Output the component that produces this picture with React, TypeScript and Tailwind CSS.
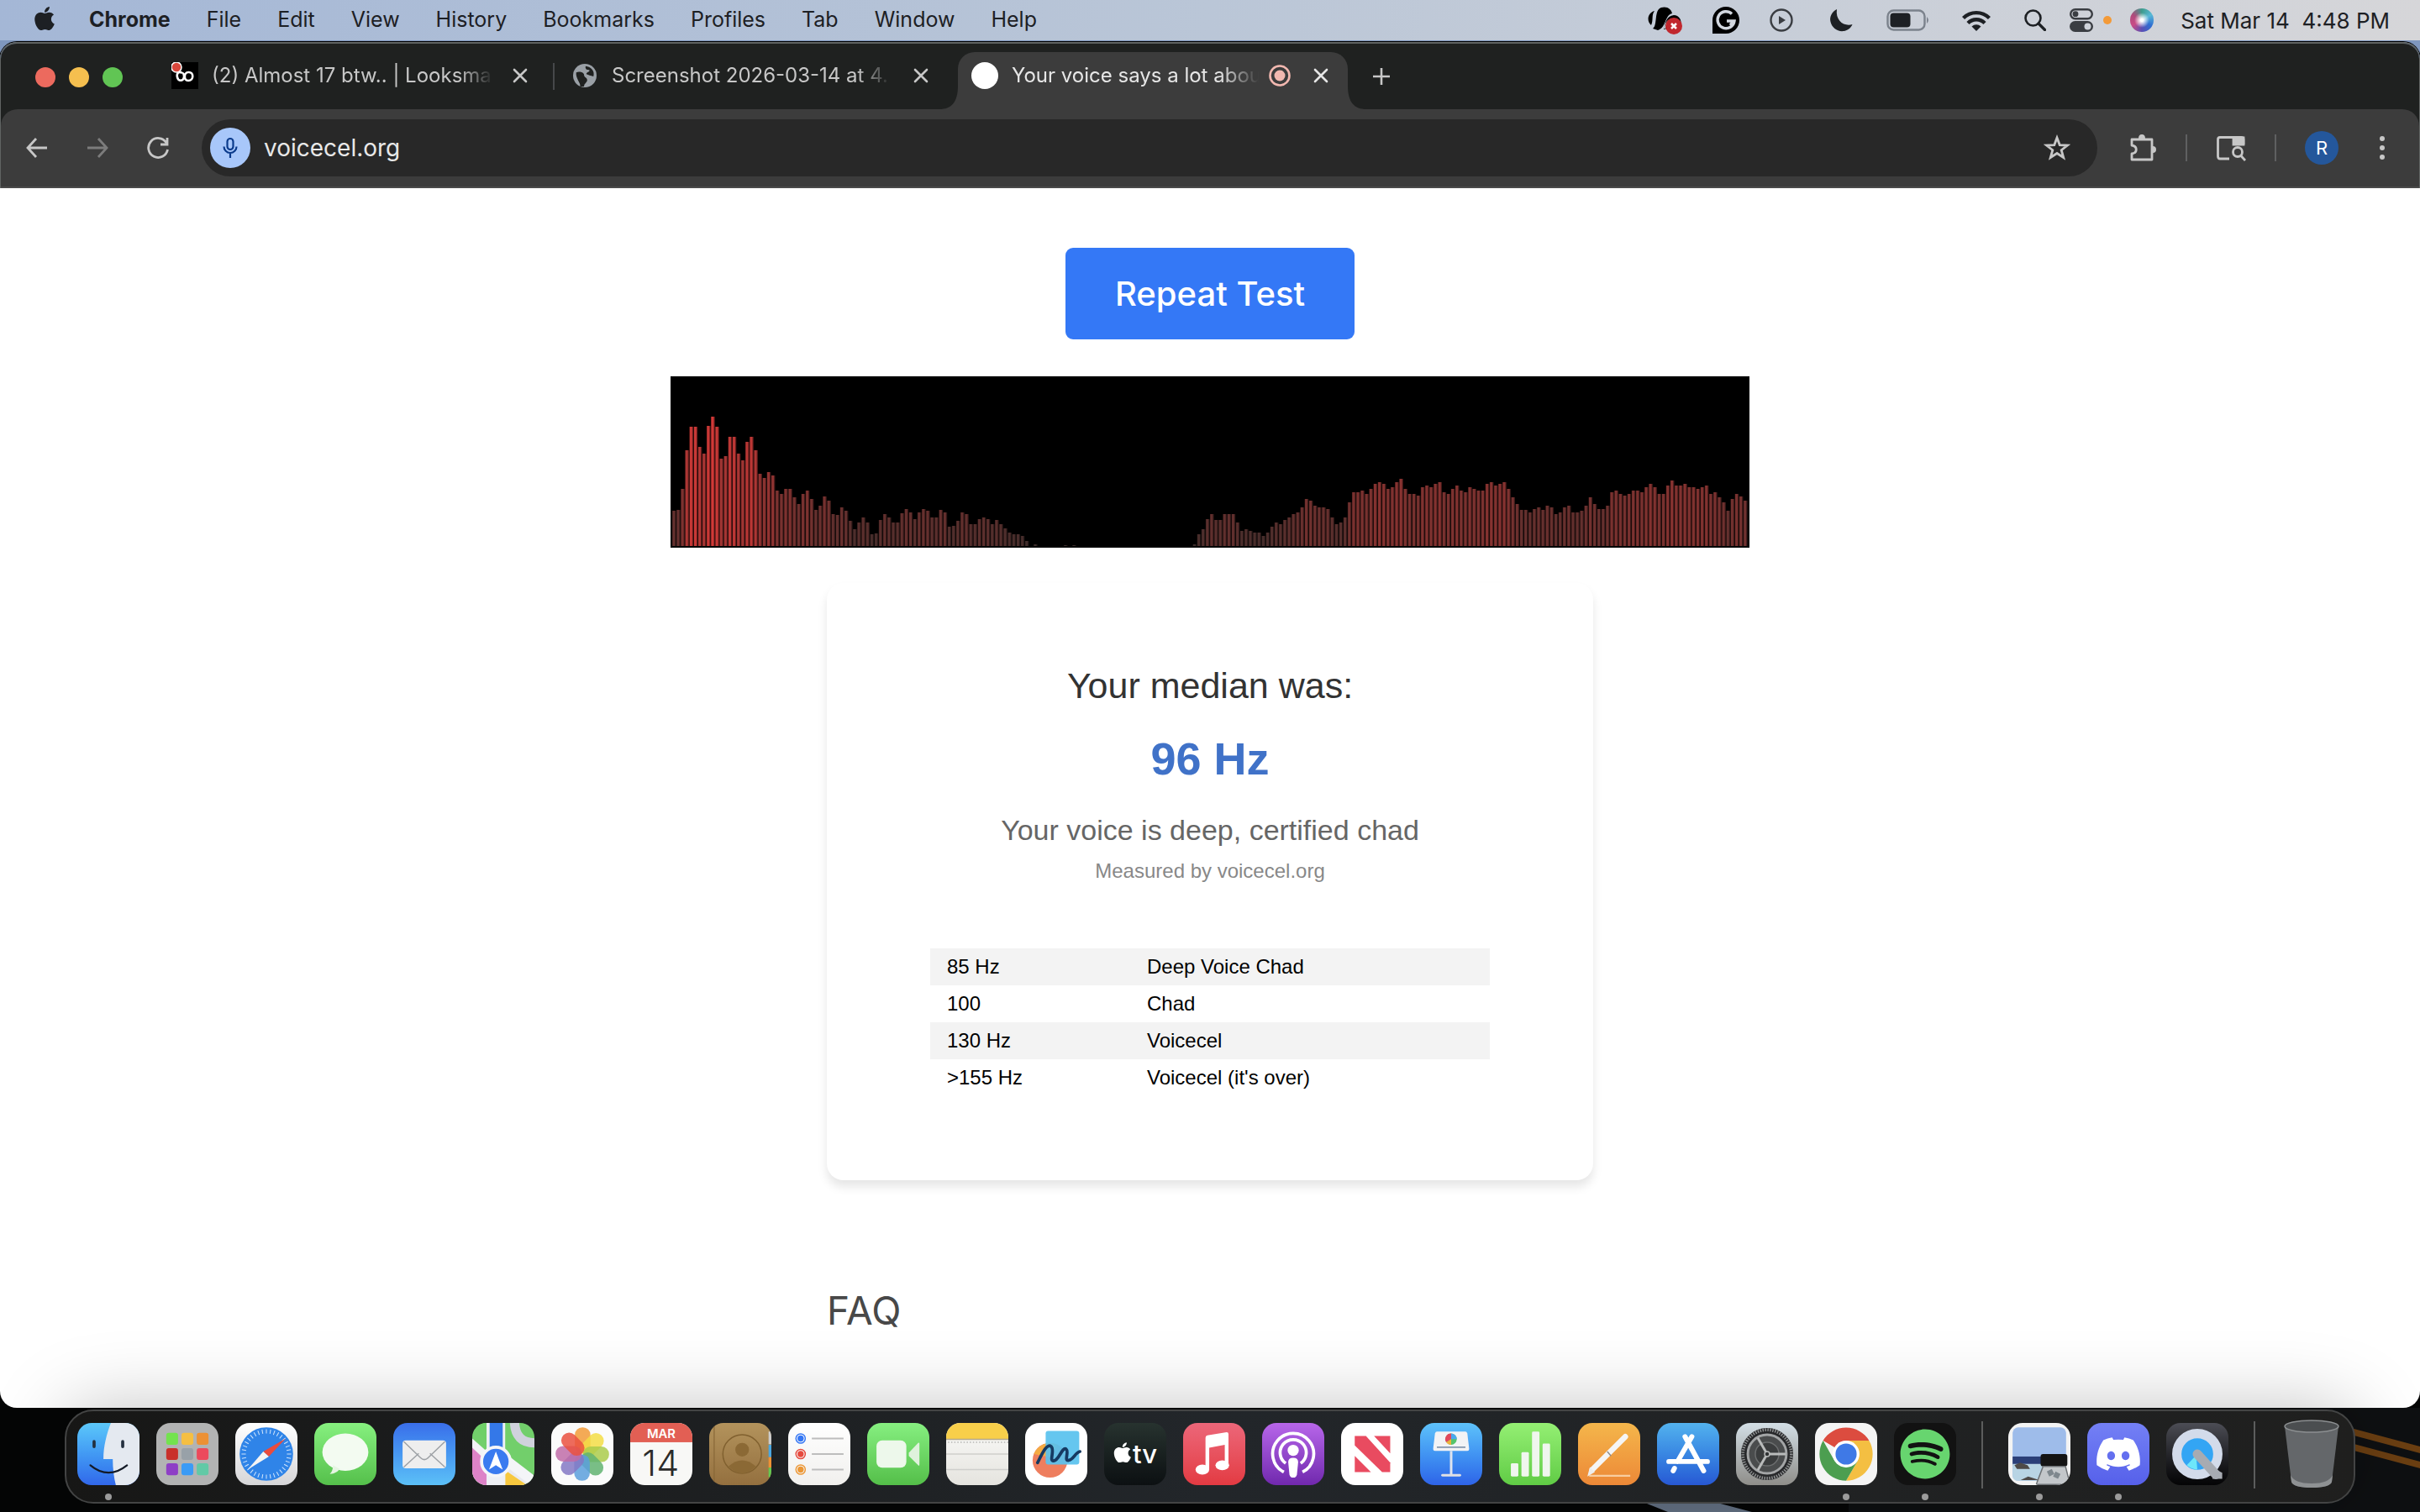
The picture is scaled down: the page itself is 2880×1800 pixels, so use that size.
import type { ReactNode } from "react";
import { FaApple, FaDiscord, FaSpotify } from "react-icons/fa";

const menuItems = [
  "File",
  "Edit",
  "View",
  "History",
  "Bookmarks",
  "Profiles",
  "Tab",
  "Window",
  "Help",
];

// bar heights in px, left to right
const spectrum = [
  42, 43, 68, 114, 142, 142, 118, 110, 143, 154, 142, 104, 107, 130, 130, 110,
  102, 124, 130, 114, 86, 81, 88, 84, 66, 62, 68, 68, 58, 50, 62, 66, 56, 43,
  48, 59, 54, 38, 37, 46, 42, 30, 20, 28, 34, 28, 14, 15, 31, 38, 34, 28, 28,
  39, 44, 40, 32, 40, 44, 42, 34, 34, 43, 40, 23, 24, 30, 40, 38, 26, 26, 32,
  34, 32, 26, 31, 26, 21, 16, 14, 14, 12, 6, 0, 2, 0, 0, 0, 0, 0, 0, 1, 0, 1,
  0, 0, 0, 0, 0, 0, 0, 0, 0, 0, 0, 0, 0, 0, 0, 0, 0, 0, 0, 0, 0, 0, 0, 0, 0, 0,
  0, 2, 14, 20, 32, 38, 31, 31, 38, 38, 38, 28, 18, 20, 18, 16, 16, 12, 16, 23,
  28, 26, 31, 34, 38, 40, 46, 56, 54, 48, 46, 46, 44, 34, 26, 28, 34, 52, 64,
  64, 66, 62, 68, 74, 76, 74, 68, 70, 76, 80, 68, 62, 62, 60, 70, 72, 70, 74,
  76, 64, 62, 68, 72, 66, 64, 70, 68, 66, 66, 74, 76, 72, 74, 76, 68, 58, 50,
  43, 43, 40, 44, 46, 43, 48, 46, 38, 40, 46, 48, 40, 40, 42, 48, 58, 50, 44,
  44, 48, 64, 66, 62, 60, 62, 66, 66, 64, 70, 74, 70, 62, 62, 72, 78, 72, 72,
  74, 70, 70, 68, 70, 72, 62, 64, 58, 52, 42, 56, 62, 59, 54,
];

const ranges = [
  ["85 Hz", "Deep Voice Chad"],
  ["100", "Chad"],
  ["130 Hz", "Voicecel"],
  [">155 Hz", "Voicecel (it's over)"],
];

type DockApp = {
  name: string;
  bg: string;
  running?: boolean;
  art: ReactNode;
};

const ticks = (n: number) => Array.from({ length: n }, (_, i) => (360 / n) * i);

const apps: DockApp[] = [
  {
    name: "Finder",
    bg: "bg-linear-to-b from-[#5cc8fa] to-[#3267ea]",
    running: true,
    art: (
      <>
        <path d="M54 0C47 18 42 38 42 58H57C57 74 59 88 62 100H100V0Z" fill="#e4e9f0" />
        <path d="M27 30v8M73 30v8" stroke="#24303f" strokeWidth="5" strokeLinecap="round" />
        <path d="M21 68Q50 92 80 68" fill="none" stroke="#131a26" strokeWidth="3" strokeLinecap="round" />
      </>
    ),
  },
  {
    name: "Launchpad",
    bg: "bg-[#b2b3b3]",
    art: (
      <>
        {["#73e34e", "#f5bf42", "#ec9135", "#c9302a", "#98a1a8", "#ec4a5c", "#8e3fc6", "#3b9bf5", "#62c9a6"].map((c, i) => (
          <rect key={c} x={16 + (i % 3) * 24.5} y={16 + Math.floor(i / 3) * 24.5} width="19" height="19" rx="4" fill={c} />
        ))}
      </>
    ),
  },
  {
    name: "Safari",
    bg: "bg-linear-to-b from-white to-[#d6d6d8]",
    art: (
      <>
        <circle cx="50" cy="50" r="43" fill="#2f84e8" />
        {ticks(36).map((a) => (
          <path key={a} d="M50 10v7" stroke="#cfe4fb" strokeWidth="1.4" transform={`rotate(${a} 50 50)`} />
        ))}
        <path d="M81 25L45 46L54 54Z" fill="#ea4b3d" />
        <path d="M20 75L45 46L54 54Z" fill="#f4f4f4" />
      </>
    ),
  },
  {
    name: "Messages",
    bg: "bg-linear-to-b from-[#86f07f] to-[#55c04b]",
    art: (
      <>
        <ellipse cx="50" cy="47" rx="37" ry="30" fill="#f3fbf1" />
        <path d="M30 68c0 8-2 11-5 14 8 0 13-4 16-8z" fill="#e6f5e3" />
      </>
    ),
  },
  {
    name: "Mail",
    bg: "bg-linear-to-b from-[#3a6eea] to-[#5cc0f7]",
    art: (
      <>
        <rect x="15" y="28" width="70" height="45" rx="5" fill="#eeeeee" />
        <path d="M17 71L41 49M83 71L59 49M17 30L44 56Q50 62 56 56L83 30" fill="none" stroke="#9da1a5" strokeWidth="2" />
      </>
    ),
  },
  {
    name: "Maps",
    bg: "bg-[#72cf6b]",
    art: (
      <>
        <path d="M0 25L26 48V100H0Z" fill="#f2f3f6" />
        <path d="M0 40L24 62V100H0Z" fill="#dd83c8" />
        <path d="M0 0h24v30Z" fill="#6fd068" />
        <path d="M53 52L100 90V100H25V75Z" fill="#e9eaf0" />
        <path d="M52 58L100 95" stroke="#f4f5f8" strokeWidth="16" />
        <path d="M53 76L88 100H53Z" fill="#f7c83f" />
        <path d="M68 0Q70 32 100 32" fill="none" stroke="#d0d2dc" strokeWidth="15" />
        <rect x="23" width="30" height="100" fill="#eef0f5" />
        <rect x="28" width="21" height="60" fill="#3478e8" />
        <circle cx="38" cy="62" r="23" fill="#3a7bf0" stroke="#f4f5f8" strokeWidth="5" />
        <path d="M38 46L49 75L38 68L27 75Z" fill="white" />
      </>
    ),
  },
  {
    name: "Photos",
    bg: "bg-[#fbfbfb]",
    art: (
      <>
        {["#f29b38", "#f3dd45", "#aacb4b", "#62b371", "#5a9fdc", "#8478c4", "#c06ca8", "#ea5140"].map((c, i) => (
          <rect key={c} x="38" y="7" width="25" height="42" rx="12" fill={c} opacity="0.85" transform={`rotate(${i * 45} 50 50)`} />
        ))}
      </>
    ),
  },
  {
    name: "Calendar",
    bg: "bg-[#f8f8f6]",
    art: (
      <>
        <rect width="100" height="31" fill="#e25f54" />
        <text x="50" y="24" textAnchor="middle" fill="white" fontSize="20" fontWeight="600">MAR</text>
        <text x="49" y="85" textAnchor="middle" fill="#2b2b2b" fontSize="58" fontWeight="300">14</text>
      </>
    ),
  },
  {
    name: "Contacts",
    bg: "bg-linear-to-b from-[#b3935c] to-[#94703f]",
    art: (
      <>
        <path d="M8 0v100" stroke="#866636" strokeWidth="1.5" />
        <circle cx="53" cy="50" r="31" fill="none" stroke="#80602f" strokeWidth="2" />
        <circle cx="53" cy="43" r="11" fill="#8b6935" />
        <path d="M31 70Q53 50 75 70Q53 92 31 70Z" fill="#8b6935" />
        <path d="M98 14v20" stroke="#ccc" strokeWidth="5" />
        <path d="M98 35v20" stroke="#4ba7e0" strokeWidth="5" />
        <path d="M98 55v17" stroke="#ee9134" strokeWidth="5" />
        <path d="M98 72v15" stroke="#65c950" strokeWidth="5" />
      </>
    ),
  },
  {
    name: "Reminders",
    bg: "bg-linear-to-b from-white to-[#f1f0ee]",
    art: (
      <>
        {["#3577f4", "#e64a3e", "#ec9735"].map((c, i) => (
          <g key={c}>
            <circle cx="20" cy={25 + i * 25} r="7.5" fill="none" stroke={c} strokeWidth="2" />
            <circle cx="20" cy={25 + i * 25} r="5" fill={c} />
            <path d={`M38 ${25 + i * 25}H89`} stroke="#bdbdbd" strokeWidth="2.4" />
          </g>
        ))}
      </>
    ),
  },
  {
    name: "FaceTime",
    bg: "bg-linear-to-b from-[#86ef80] to-[#54bf49]",
    art: (
      <>
        <rect x="15" y="28" width="48" height="44" rx="9" fill="#edf8eb" />
        <path d="M67 48L82 32Q84 31 84 33V67Q84 70 82 68L67 53Z" fill="#dff2dc" />
      </>
    ),
  },
  {
    name: "Notes",
    bg: "bg-linear-to-b from-[#fafaf8] to-[#e5e4df]",
    art: (
      <>
        <rect width="100" height="26" fill="#f8cf4a" />
        <path d="M0 26.5H100" stroke="#b5a98c" strokeWidth="2" />
        <path d="M3 31H100" stroke="#b6b6b2" strokeWidth="2" strokeDasharray="2 3" />
        <path d="M0 50H100M0 75H100" stroke="#cfcfcc" strokeWidth="2" />
      </>
    ),
  },
  {
    name: "Freeform",
    bg: "bg-white",
    art: (
      <>
        <circle cx="40" cy="60" r="28" fill="#ee7e5e" />
        <path d="M14 50A28 28 0 0 1 52 35L40 55Z" fill="#f4ab43" />
        <rect x="33" y="13" width="54" height="54" rx="4" fill="#59c2ee" opacity="0.93" />
        <path d="M20 64C27 50 35 32 42 38C48 44 38 62 46 61C55 60 59 38 66 42C71 46 62 62 70 60C78 59 80 48 88 46" fill="none" stroke="#163a62" strokeWidth="5" strokeLinecap="round" />
      </>
    ),
  },
  {
    name: "TV",
    bg: "bg-linear-to-b from-[#27332f] to-[#0c1012]",
    art: (
      <>
        <FaApple x="11" y="29" size={37} color="white" />
        <text x="46" y="65" fill="white" fontSize="42" fontWeight="500">tv</text>
      </>
    ),
  },
  {
    name: "Music",
    bg: "bg-linear-to-b from-[#ec6679] to-[#e33a42]",
    art: (
      <>
        <path d="M36 24Q36 21 39 20L70 15Q73 15 73 18V66H67V35L42 40V74H36Z" fill="white" />
        <ellipse cx="31" cy="75" rx="11" ry="8" fill="white" />
        <ellipse cx="63" cy="68" rx="11" ry="8" fill="white" />
      </>
    ),
  },
  {
    name: "Podcasts",
    bg: "bg-linear-to-b from-[#b866ea] to-[#7128ae]",
    art: (
      <>
        <path d="M35 79A33 33 0 1 1 65 79" fill="none" stroke="white" strokeWidth="5" />
        <path d="M38 65A21 21 0 1 1 62 65" fill="none" stroke="white" strokeWidth="5" />
        <circle cx="50" cy="44" r="9" fill="white" />
        <path d="M42 63Q42 56 50 56Q58 56 58 63L56 83Q55 88 50 88Q45 88 44 83Z" fill="white" />
      </>
    ),
  },
  {
    name: "News",
    bg: "bg-white",
    art: (
      <>
        <path d="M22 21H40L79 64V79H66L22 36Z" fill="#e94b60" />
        <path d="M53 21H79V49ZM22 53V79H48Z" fill="#e94b60" />
      </>
    ),
  },
  {
    name: "Keynote",
    bg: "bg-linear-to-b from-[#5ec2fa] to-[#2f63e8]",
    art: (
      <>
        <path d="M27 14H73Q75 14 76 17L79 42Q79 45 76 45H24Q21 45 21 42L24 17Q25 14 27 14Z" fill="#f2f3f5" />
        <path d="M27 39H73" stroke="#8597ae" strokeWidth="2.5" />
        <circle cx="50" cy="26" r="9" fill="#55c46c" />
        <path d="M50 26V17A9 9 0 0 1 59 26Z" fill="#4aa8ee" />
        <path d="M50 26V17A9 9 0 0 0 42 31Z" fill="#e1485c" />
        <path d="M50 26L42 31A9 9 0 0 0 50 35Z" fill="#efb23c" />
        <rect x="48" y="45" width="4" height="38" fill="#dfe4ee" />
        <rect x="34" y="82" width="32" height="4" rx="2" fill="#dfe0e4" />
      </>
    ),
  },
  {
    name: "Numbers",
    bg: "bg-linear-to-b from-[#94ef73] to-[#60cc45]",
    art: (
      <>
        <rect x="19" y="65" width="12" height="21" rx="2" fill="#f0f6ee" />
        <rect x="36" y="47" width="12" height="39" rx="2" fill="#f0f6ee" />
        <rect x="53" y="14" width="12" height="72" rx="2" fill="#f0f6ee" />
        <rect x="70" y="33" width="12" height="53" rx="2" fill="#f0f6ee" />
      </>
    ),
  },
  {
    name: "Pages",
    bg: "bg-linear-to-b from-[#f4b64b] to-[#ec8837]",
    art: (
      <>
        <path d="M18 85H84" stroke="#f8cda0" strokeWidth="3" />
        <path d="M23 75L76 22" stroke="#f5f5f5" strokeWidth="9" strokeLinecap="round" />
        <path d="M15 86L19 71L27 79Z" fill="#ededed" />
        <path d="M47 46L53 53" stroke="#8b8b8b" strokeWidth="2" />
      </>
    ),
  },
  {
    name: "App Store",
    bg: "bg-linear-to-b from-[#53b2ee] to-[#2858d4]",
    art: (
      <g stroke="white" strokeWidth="8" strokeLinecap="round">
        <path d="M56 22L33 62M45 22L75 77M19 62H81M28 73L26 77" />
      </g>
    ),
  },
  {
    name: "System Settings",
    bg: "bg-linear-to-b from-[#d3dfe6] to-[#8f8e8a]",
    art: (
      <>
        <circle cx="50" cy="50" r="42" fill="#27282a" />
        <circle cx="50" cy="50" r="39" fill="none" stroke="#8f9192" strokeWidth="5" strokeDasharray="2 2" />
        <circle cx="50" cy="50" r="31" fill="#4a4c4d" stroke="#a3a5a6" strokeWidth="4" />
        <circle cx="50" cy="50" r="19" fill="#3b3d3e" stroke="#6c6e6f" strokeWidth="2" />
        {ticks(3).map((a) => (
          <path key={a} d="M50 50H80" stroke="#b9bbbb" strokeWidth="4" transform={`rotate(${a} 50 50)`} />
        ))}
        <circle cx="50" cy="50" r="4" fill="#303233" stroke="#b9bbbb" strokeWidth="2" />
      </>
    ),
  },
  {
    name: "Google Chrome",
    bg: "bg-[#f4f4f4]",
    running: true,
    art: (
      <>
        <path d="M50 50L13 28.5A43 43 0 0 1 87 28.5H50Z" fill="#dc4c3f" />
        <path d="M50 28.5H87A43 43 0 0 1 50 93L68.6 60.7Z" fill="#f4bf42" />
        <path d="M13 28.5L31.4 60.7L50 71.5L68.6 60.7L50 93A43 43 0 0 1 13 28.5Z" fill="#4c9e50" />
        <circle cx="50" cy="50" r="21.5" fill="white" />
        <circle cx="50" cy="50" r="17" fill="#3f79e6" />
      </>
    ),
  },
  {
    name: "Spotify",
    bg: "bg-[#121212]",
    running: true,
    art: <FaSpotify x="9" y="9" size={82} color="#67d56f" />,
  },
];

const recentApps: DockApp[] = [
  {
    name: "Preview",
    bg: "bg-[#f3f3f3]",
    running: true,
    art: (
      <>
        <rect x="7" y="7" width="86" height="86" rx="9" fill="#9ebcea" />
        <rect x="7" y="54" width="86" height="14" fill="#2b3f78" />
        <path d="M7 66H93V84Q93 93 84 93H16Q7 93 7 84Z" fill="#b8d4e4" />
        <path d="M10 68l9-4 12 4 4 6H14ZM20 92l12-6 18 6Z" fill="#4e4a48" />
        <rect x="52" y="50" width="43" height="20" rx="4" fill="#141414" />
        <path d="M56 70H92L99 97Q99 99 96 99H48Q44 99 46 96Z" fill="#c3c7ca" stroke="#6d7174" strokeWidth="2" />
        <path d="M62 78l8-4 4 8-8 4ZM76 78l8 4-4 8-8-4Z" fill="#7e878d" />
      </>
    ),
  },
  {
    name: "Discord",
    bg: "bg-linear-to-b from-[#7480f5] to-[#5660ea]",
    running: true,
    art: <FaDiscord x="12" y="12" size={76} color="white" />,
  },
  {
    name: "QuickTime Player",
    bg: "bg-linear-to-b from-[#4c4d55] to-[#050506]",
    art: (
      <>
        <circle cx="50" cy="50" r="33" fill="#33a5f4" stroke="#d3dbea" strokeWidth="15" />
        <path d="M33 68A25 25 0 0 0 50 75L48 52Z" fill="#6ee6fa" />
        <path d="M50 50L80 83" stroke="#a7abb2" strokeWidth="15" strokeLinecap="round" />
        <path d="M74 90H90V80L78 74Z" fill="#a7abb2" />
      </>
    ),
  },
];

function DockIcon({ app }: { app: DockApp }) {
  return (
    <button aria-label={app.name} className="flex w-[94px] shrink-0 flex-col items-center pt-3.5">
      <svg viewBox="0 0 100 100" className={`size-[74px] rounded-[17px] ${app.bg}`}>
        {app.art}
      </svg>
      <span className={`mt-2.5 size-2 rounded-full ${app.running ? "bg-[#9b9b9b]" : ""}`} />
    </button>
  );
}

function DockDivider() {
  return <div className="mx-5 mt-3 mb-4 w-0.5 shrink-0 bg-[#5c5d5d]" />;
}

function CloseIcon() {
  return (
    <svg viewBox="0 0 24 24" className="size-6" stroke="currentColor" strokeWidth="2.6" strokeLinecap="round">
      <path d="M5 5L19 19M19 5L5 19" />
    </svg>
  );
}

function MenuBar() {
  return (
    <header className="flex h-12 shrink-0 items-center bg-linear-to-r from-[#a4b7d6] via-[#bac6d7] to-[#d6d6d9] pr-9 pl-[37px] text-[25px] text-[#1d2024]">
      <FaApple className="mb-1 size-8" />
      <nav className="ml-[37px] flex items-center gap-[43px]">
        <a href="#chrome" className="font-bold">Chrome</a>
        {menuItems.map((item) => (
          <a key={item} href={`#${item}`}>
            {item}
          </a>
        ))}
      </nav>

      <div className="ml-auto flex items-center">
        <svg viewBox="0 0 42 36" className="mr-9 h-9 w-[42px]">
          <path d="M5 24C-1 19 1 9 9 7C5 12 8 18 5 24Z" fill="black" />
          <path d="M7 28C13 24 8 6 17 3C24 1 29 5 30 10C21 12 23 27 13 30Z" fill="black" />
          <path d="M20 29C22 21 23 13 32 12C38 12 42 18 40 24Z" fill="black" />
          <path d="M21 28C23 20 27 16 34 17" fill="none" stroke="#c3ccd8" strokeWidth="2" />
          <circle cx="32" cy="25" r="10" fill="#c1272d" />
          <path d="M29 22l6 6M35 22l-6 6" stroke="white" strokeWidth="2.5" />
        </svg>
        <svg viewBox="0 0 32 32" className="mr-9 size-8">
          <path d="M16 0A16 16 0 1 1 16 32H0V16A16 16 0 0 1 16 0Z" fill="black" />
          <path d="M23 8.5A10 10 0 1 0 26 17H17M25.5 17L21 22" fill="none" stroke="#d3d8e0" strokeWidth="3.4" />
        </svg>
        <svg viewBox="0 0 28 28" className="mr-[43px] size-7" fill="none" stroke="#3a3d42" strokeWidth="2.4">
          <circle cx="14" cy="14" r="12.5" />
          <path d="M11 9L19 14L11 19Z" fill="#3a3d42" stroke="none" />
        </svg>
        <svg viewBox="0 0 28 28" className="mr-10 size-7">
          <path d="M9 1C3 4 0 10 1.5 16C3 23 10 28 17 27C22 26.5 26 23 27.5 19C18 22 7 15 9 1Z" fill="#1d2024" />
        </svg>
        <svg viewBox="0 0 52 26" className="mr-[38px] h-[26px] w-[52px]">
          <rect x="1.5" y="1.5" width="44" height="23" rx="7" fill="none" stroke="#7b828c" strokeWidth="2.4" />
          <rect x="4.5" y="4.5" width="24" height="17" rx="4" fill="#1d2024" />
          <path d="M48 9Q52 13 48 17Z" fill="#7b828c" />
        </svg>
        <svg viewBox="0 0 34 25" className="mr-10 h-[25px] w-[34px]" fill="none" stroke="#1d2024" strokeWidth="4.4">
          <path d="M1.5 9.5A22 22 0 0 1 32.5 9.5" />
          <path d="M7 15.5A14 14 0 0 1 27 15.5" />
          <path d="M17 25L11.5 19.5A8 8 0 0 1 22.5 19.5Z" fill="#1d2024" stroke="none" />
        </svg>
        <svg viewBox="0 0 26 26" className="mr-7 size-[26px]" fill="none" stroke="#1d2024" strokeWidth="2.6">
          <circle cx="10.5" cy="10.5" r="9" />
          <path d="M17 17L24.5 24.5" strokeWidth="3.2" strokeLinecap="round" />
        </svg>
        <svg viewBox="0 0 28 28" className="mr-3 size-7">
          <rect x="1.2" y="1.2" width="25.6" height="11" rx="5.5" fill="none" stroke="#3a3d42" strokeWidth="2.4" />
          <circle cx="7" cy="6.7" r="3.4" fill="#3a3d42" />
          <rect y="15" width="28" height="13" rx="6.5" fill="#3a3d42" />
          <circle cx="21.5" cy="21.5" r="4" fill="#cfd3da" />
        </svg>
        <span className="mr-[22px] size-2.5 rounded-full bg-[#f39a38]" />
        <span className="mr-8 size-7 rounded-full bg-[radial-gradient(circle,white_8%,transparent_45%),conic-gradient(#3e9c8d,#58b8d6,#2f6fd2,#5a4fb4,#c94b86,#b04a7c,#3e9c8d)]" />
        <time className="text-[26px] whitespace-pre">Sat Mar 14  4:48 PM</time>
      </div>
    </header>
  );
}

function TabStrip() {
  return (
    <div className="flex h-[78px] items-end bg-[#1f2120] text-2xl text-[#c7c7c7]">
      <div className="flex h-[68px] w-[179px] shrink-0 gap-4 pt-[18px] pl-[41px]">
        <button aria-label="Close window" className="size-6 rounded-full bg-[#ec6a5e]" />
        <button aria-label="Minimize window" className="size-6 rounded-full bg-[#f5bf4f]" />
        <button aria-label="Zoom window" className="size-6 rounded-full bg-[#61c554]" />
      </div>

      <div className="flex h-[68px] w-[478px] items-center pr-[27px] pb-3 pl-6">
        <svg viewBox="0 0 32 32" className="size-8 shrink-0 bg-black">
          <path d="M13 13C8 10 6 14 7 18C8 23 14 23 15 18C15 14 14 13 13 13M20 12C15 12 14 22 20 22C27 22 27 11 20 12" fill="none" stroke="white" strokeWidth="2.6" />
          <circle cx="6" cy="6" r="6" fill="#d9473c" stroke="white" strokeWidth="1.5" />
        </svg>
        <span className="ml-4 min-w-0 flex-1 whitespace-nowrap [mask-image:linear-gradient(to_right,black_88%,transparent)]">
          (2) Almost 17 btw.. | Looksma
        </span>
        <button aria-label="Close tab" className="ml-5">
          <CloseIcon />
        </button>
      </div>

      <div className="mb-[23px] h-8 w-0.5 bg-[#46484a]" />

      <div className="flex h-[68px] w-[458px] items-center pr-2.5 pb-3 pl-[22px]">
        <svg viewBox="0 0 30 30" className="size-7 shrink-0">
          <circle cx="15" cy="15" r="15" fill="#9aa0a6" />
          <path d="M4 11C8 9 14 11 14 14C14 18 18 17 18 21C18 24 14 25 14 29H9C10 24 3 19 4 11ZM16 3C15 7 18 8 21 8C21 11 17 10 17 13C20 14 22 15 26 16C28 9 23 4 16 3Z" fill="#1f2120" />
        </svg>
        <span className="ml-[18px] min-w-0 flex-1 whitespace-nowrap [mask-image:linear-gradient(to_right,black_88%,transparent)]">
          Screenshot 2026-03-14 at 4.
        </span>
        <button aria-label="Close tab" className="ml-6">
          <CloseIcon />
        </button>
      </div>

      <svg viewBox="0 0 22 68" className="h-[68px] w-[22px] shrink-0">
        <path d="M22 40C22 60 14 68 0 68H22Z" fill="#3c3c3c" />
      </svg>
      <div className="flex h-[68px] w-[464px] items-center rounded-t-[20px] bg-[#3c3c3c] pr-5 pb-3 pl-4 text-[#e6e6e6]">
        <span className="size-8 shrink-0 rounded-full bg-white" />
        <span className="ml-4 min-w-0 flex-1 whitespace-nowrap [mask-image:linear-gradient(to_right,black_84%,transparent)]">
          Your voice says a lot abou
        </span>
        <svg viewBox="0 0 26 26" className="ml-3 size-[26px] shrink-0">
          <circle cx="13" cy="13" r="11.5" fill="none" stroke="#f2b8b0" strokeWidth="2.6" />
          <circle cx="13" cy="13" r="6.5" fill="#f2b8b0" />
        </svg>
        <button aria-label="Close tab" className="ml-6">
          <CloseIcon />
        </button>
      </div>
      <svg viewBox="0 0 22 68" className="h-[68px] w-[22px] shrink-0">
        <path d="M0 40C0 60 8 68 22 68H0Z" fill="#3c3c3c" />
      </svg>
      <button aria-label="New tab" className="mb-[27px] ml-1.5">
        <svg viewBox="0 0 24 24" className="size-6" stroke="currentColor" strokeWidth="2.6">
          <path d="M12 2V22M2 12H22" />
        </svg>
      </button>
    </div>
  );
}

function Toolbar() {
  return (
    <div className="bg-[#1f2120]">
      <div className="flex h-[94px] items-center rounded-t-[20px] border-b-2 border-[#4a4a4a] bg-[#3c3c3c] pr-[30px] pl-[29px] text-[#c7c7c7]">
        <button aria-label="Back">
          <svg viewBox="0 0 28 28" className="size-7" fill="none" stroke="currentColor" strokeWidth="2.8">
            <path d="M26 14H3M13 3L3 14L13 25" />
          </svg>
        </button>
        <button aria-label="Forward" className="ml-11 text-[#7c7c7c]">
          <svg viewBox="0 0 28 28" className="size-7" fill="none" stroke="currentColor" strokeWidth="2.8">
            <path d="M2 14H25M15 3L25 14L15 25" />
          </svg>
        </button>
        <button aria-label="Reload" className="ml-11">
          <svg viewBox="0 0 28 28" className="size-7" fill="none" stroke="currentColor" strokeWidth="2.8">
            <path d="M24 8A11.5 11.5 0 1 0 25.500 16M25 2V10H17" />
          </svg>
        </button>

        <div className="ml-[38px] flex h-[68px] flex-1 items-center rounded-full bg-[#282828] pr-8 pl-2.5">
          <button aria-label="Microphone in use" className="flex size-12 items-center justify-center rounded-full bg-[#a8c7fa]">
            <svg viewBox="0 0 24 28" className="h-7 w-6" fill="none" stroke="#0b3b8c" strokeWidth="2.2">
              <rect x="8.5" y="3" width="7" height="13" rx="3.5" />
              <path d="M4.5 12.5A7.5 7.5 0 0 0 19.5 12.5M12 20V26" />
            </svg>
          </button>
          <input
            aria-label="Address"
            defaultValue="voicecel.org"
            className="ml-4 min-w-0 flex-1 bg-transparent text-[28px] text-[#e8e8e8] outline-none"
          />
          <button aria-label="Bookmark this tab">
            <svg viewBox="0 0 32 32" className="size-8" fill="none" stroke="currentColor" strokeWidth="2.8">
              <path d="M16 4L19.200 12.6L28.5 13L21.2 18.7L23.7 27.5L16 22.5L8.3 27.5L10.8 18.7L3.5 13L12.8 12.6Z" />
            </svg>
          </button>
        </div>

        <button aria-label="Extensions" className="ml-[37px]">
          <svg viewBox="0 0 34 34" className="size-[34px]" fill="none" stroke="currentColor" strokeWidth="2.8">
            <path d="M4 7H28V31H4V24C11 23 11 15 4 14Z" strokeLinejoin="round" />
            <path d="M12 6Q12 1 16 1Q20 1 20 6ZM29 15Q33 15 33 19Q33 23 29 23Z" fill="currentColor" stroke="none" />
          </svg>
        </button>
        <div className="mx-[34px] h-8 w-0.5 bg-[#5f6061]" />
        <button aria-label="Search tabs">
          <svg viewBox="0 0 36 34" className="h-[34px] w-9" fill="none" stroke="currentColor" strokeWidth="2.8">
            <path d="M16 30H5Q2.5 30 2.5 27V7Q2.5 4.5 5 4.5H30Q33 4.5 33 7V13" />
            <path d="M21 5H33V13H21Z" fill="currentColor" />
            <circle cx="26" cy="22" r="5.5" />
            <path d="M29.5 26L35 32" />
          </svg>
        </button>
        <div className="mx-[34px] h-8 w-0.5 bg-[#5f6061]" />
        <button aria-label="Profile" className="flex size-10 items-center justify-center rounded-full bg-[#24579b] text-[22px] text-white">
          R
        </button>
        <button aria-label="Menu" className="ml-[38px]">
          <svg viewBox="0 0 28 28" className="size-7" fill="currentColor">
            <circle cx="14" cy="3" r="3" />
            <circle cx="14" cy="14" r="3" />
            <circle cx="14" cy="25" r="3" />
          </svg>
        </button>
      </div>
    </div>
  );
}

function Spectrum() {
  return (
    <svg viewBox="0 0 1284 204" className="mt-11 w-full max-w-[1284px] shrink-0 bg-black">
      {spectrum.map((h, i) => (
        <g key={i} fill={`rgb(${Math.min(210, 58 + h)}, ${44 + h / 12}, ${42 + h / 12})`}>
          <rect x={2 + i * 5.12} y={202 - h} width="4.6" height={h} opacity="0.5" />
          <rect x={2.4 + i * 5.12} y={202 - h} width="3" height={h} />
        </g>
      ))}
    </svg>
  );
}

function Page() {
  return (
    <main className="flex min-h-0 flex-1 flex-col items-center overflow-hidden rounded-b-[20px] bg-white pt-[71px]">
      <button className="shrink-0 rounded-[9px] bg-[#3478f6] px-[59px] py-[26px] text-[40px] leading-[57px] font-medium text-white">
        Repeat Test
      </button>

      <Spectrum />

      <section className="mt-[42px] flex w-full max-w-[912px] shrink-0 flex-col items-center rounded-[20px] bg-white px-[123px] pt-24 pb-[100px] font-['Liberation_Sans',Arial,sans-serif] shadow-[0_8px_12px_rgba(0,0,0,0.1)]">
        <h2 className="text-[43px] leading-[52px] text-[#333333]">Your median was:</h2>
        <p className="mt-[30px] text-[54px] leading-[62px] font-bold text-[#4072c8]">96 Hz</p>
        <p className="mt-[34px] text-[34px] leading-10 text-[#666666]">Your voice is deep, certified chad</p>
        <p className="mt-[15px] text-2xl leading-7 text-[#888888]">Measured by voicecel.org</p>
        <table className="mt-[78px] w-full text-2xl leading-7 text-black">
          <tbody>
            {ranges.map(([hz, label]) => (
              <tr key={hz} className="odd:bg-[#f3f3f3]">
                <td className="w-[238px] py-2 pl-5">{hz}</td>
                <td className="py-2 pl-5">{label}</td>
              </tr>
            ))}
          </tbody>
        </table>
      </section>

      <section className="mt-[127px] w-full max-w-[912px] shrink-0">
        <h2 className="text-[46px] leading-[56px] text-[#484848]">FAQ</h2>
      </section>
    </main>
  );
}

function Dock() {
  return (
    <footer className="relative flex shrink-0 justify-center pt-0.5 pb-2.5">
      <svg viewBox="0 0 2880 124" preserveAspectRatio="xMaxYMin slice" className="absolute inset-0 size-full">
        <rect x="2200" width="680" height="124" fill="#0e1012" />
        <path d="M1955 112H2040L2085 124H1985Z" fill="#667487" />
        <path d="M2790 22L2880 46V54L2790 30ZM2790 40L2880 64V72L2790 48Z" fill="#6b3f12" />
      </svg>
      <div className="relative flex h-28 rounded-[34px] border-2 border-[#434444] bg-linear-to-r from-[#171716] via-[#22262a] to-[#1f1f1e] px-[3px] shadow-[0_0_90px_rgba(0,0,0,0.25)]">
        {apps.map((app) => (
          <DockIcon key={app.name} app={app} />
        ))}
        <DockDivider />
        {recentApps.map((app) => (
          <DockIcon key={app.name} app={app} />
        ))}
        <DockDivider />
        <button aria-label="Trash" className="flex w-[94px] shrink-0 justify-center pt-2.5">
          <svg viewBox="0 0 66 82" className="h-[82px] w-[66px]">
            <path d="M1 8L9 74Q11 81 33 81Q55 81 57 74L65 8Z" fill="#64676a" />
            <path d="M8 66Q12 76 33 76Q54 76 58 66L57 74Q55 81 33 81Q11 81 9 74Z" fill="#8f9294" />
            <ellipse cx="33" cy="8" rx="32" ry="7" fill="#4b4e50" stroke="#8c8f91" strokeWidth="1.5" />
          </svg>
        </button>
      </div>
    </footer>
  );
}

export default function App() {
  return (
    <div className="flex h-screen flex-col overflow-hidden bg-[linear-gradient(to_bottom,#7f97be_80px,#050606_100px)] font-['Inter',sans-serif]">
      <MenuBar />
      <div className="mt-0.5 flex min-h-0 flex-1 flex-col">
        <div className="shrink-0 overflow-hidden rounded-t-[20px] border-x border-t-2 border-[#606463] shadow-[0_0_0_1px_black]">
          <TabStrip />
          <Toolbar />
        </div>
        <Page />
      </div>
      <Dock />
    </div>
  );
}
